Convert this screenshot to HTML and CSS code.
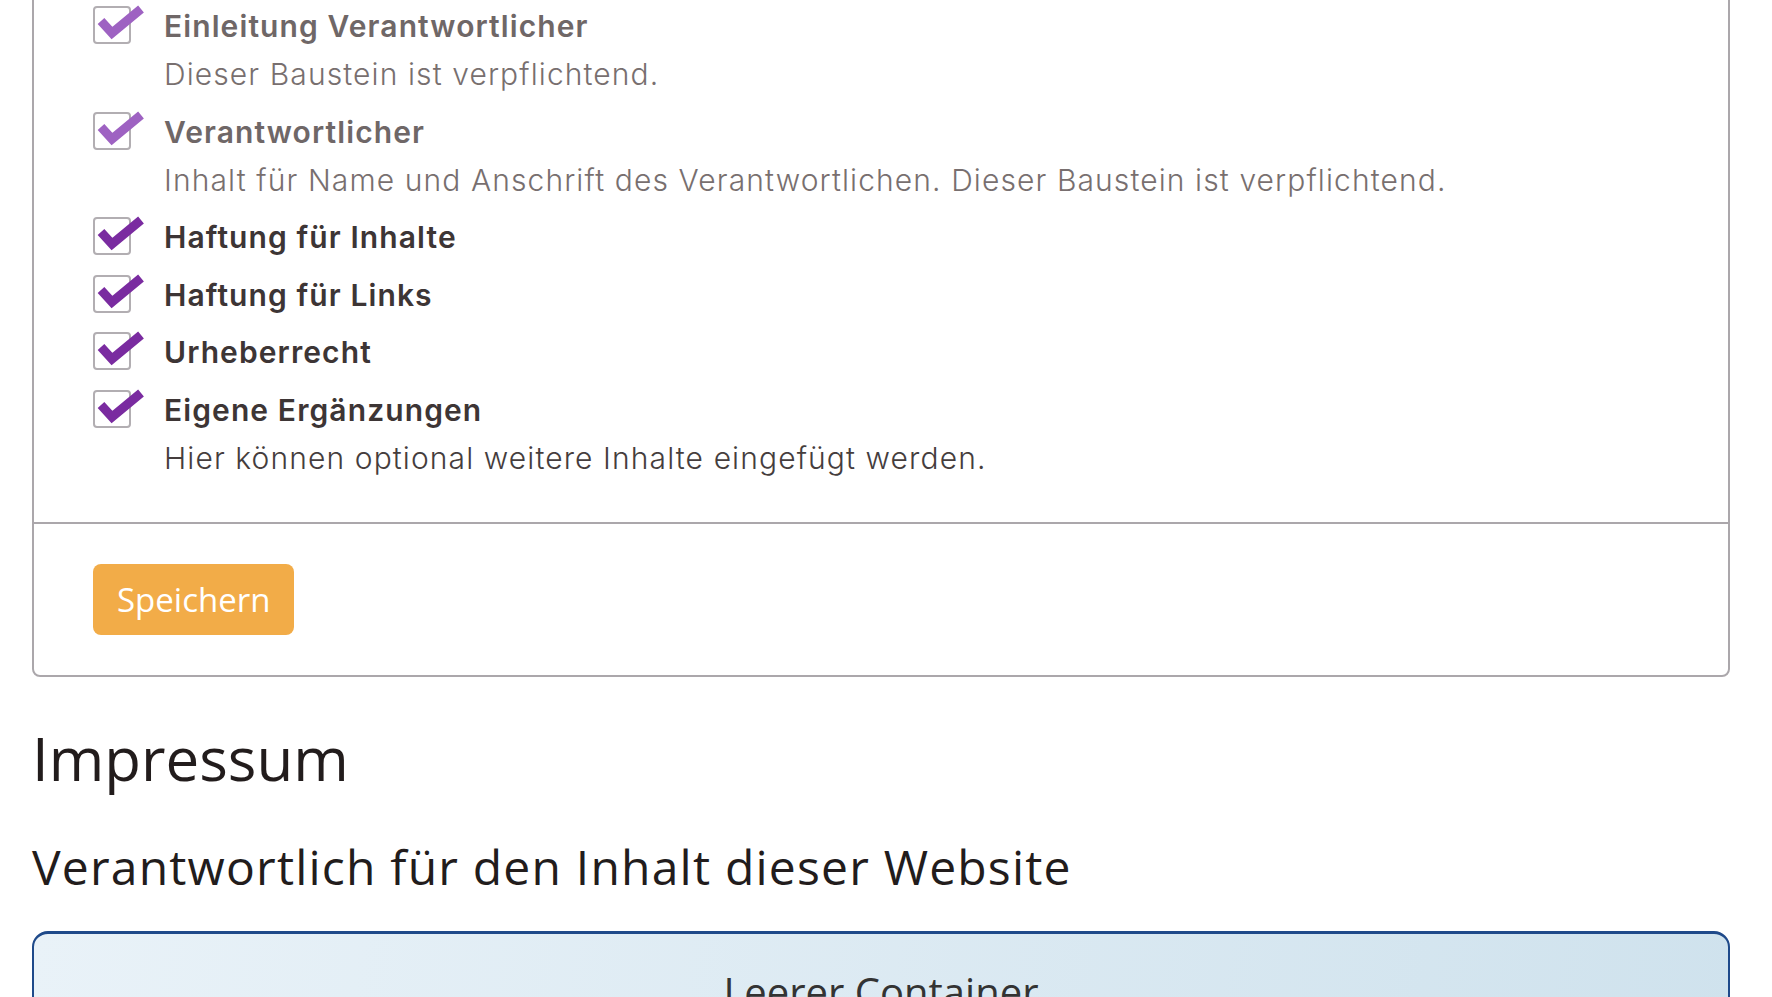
FILE: index.html
```html
<!DOCTYPE html>
<html lang="de">
<head>
<meta charset="utf-8">
<title>Impressum</title>
<link rel="stylesheet" href="styles.css">
</head>
<body>
<div class="page">
  <section class="card">
    <div class="card-body">
      <ul class="options">
        <li class="option is-locked">
          <span class="box"><svg viewBox="0 0 50 40" class="check"><path d="M8 15 L19 27 L48 3"/></svg></span>
          <div class="option-text">
            <div class="option-title">Einleitung Verantwortlicher</div>
            <div class="option-desc">Dieser Baustein ist verpflichtend.</div>
          </div>
        </li>
        <li class="option is-locked">
          <span class="box"><svg viewBox="0 0 50 40" class="check"><path d="M8 15 L19 27 L48 3"/></svg></span>
          <div class="option-text">
            <div class="option-title">Verantwortlicher</div>
            <div class="option-desc">Inhalt für Name und Anschrift des Verantwortlichen. Dieser Baustein ist verpflichtend.</div>
          </div>
        </li>
        <li class="option">
          <span class="box"><svg viewBox="0 0 50 40" class="check"><path d="M8 15 L19 27 L48 3"/></svg></span>
          <div class="option-text">
            <div class="option-title">Haftung für Inhalte</div>
          </div>
        </li>
        <li class="option">
          <span class="box"><svg viewBox="0 0 50 40" class="check"><path d="M8 15 L19 27 L48 3"/></svg></span>
          <div class="option-text">
            <div class="option-title">Haftung für Links</div>
          </div>
        </li>
        <li class="option">
          <span class="box"><svg viewBox="0 0 50 40" class="check"><path d="M8 15 L19 27 L48 3"/></svg></span>
          <div class="option-text">
            <div class="option-title">Urheberrecht</div>
          </div>
        </li>
        <li class="option">
          <span class="box"><svg viewBox="0 0 50 40" class="check"><path d="M8 15 L19 27 L48 3"/></svg></span>
          <div class="option-text">
            <div class="option-title">Eigene Ergänzungen</div>
            <div class="option-desc">Hier können optional weitere Inhalte eingefügt werden.</div>
          </div>
        </li>
      </ul>
    </div>
    <div class="card-footer">
      <button class="btn-save" type="button">Speichern</button>
    </div>
  </section>

  <h1 class="page-title">Impressum</h1>
  <h2 class="section-title">Verantwortlich für den Inhalt dieser Website</h2>
  <div class="empty-container">Leerer Container</div>
</div>
</body>
</html>
```
FILE: styles.css
```css
* { box-sizing: border-box; }
html, body { margin: 0; padding: 0; background: #fff; }
body { font-family: Inter, "Open Sans", sans-serif; overflow: hidden; }
.page { padding: 0 42px 0 32px; margin-top: -44px; }
.card { border: 2px solid #aba7ab; border-radius: 8px; }
.card-body { padding: 46px 59px 41px; }
.options { list-style: none; margin: 0; padding: 0; display: flex; flex-direction: column; gap: 12.5px; }
.option { display: flex; align-items: flex-start; gap: 33px; }
.box { flex: none; width: 38px; height: 38px; margin-top: 2px; border: 2px solid #b2aeb2; border-radius: 4px; position: relative; }
.check { position: absolute; left: -2px; top: -2px; width: 50px; height: 40px; overflow: visible; }
.check path { fill: none; stroke: #7a2ba0; stroke-width: 9; stroke-linejoin: miter; stroke-linecap: butt; }
.is-locked .check path { stroke: #9e62c2; }
.option-title { font-family: Inter, "Open Sans", sans-serif; font-weight: 600; font-size: 30px; line-height: 45px; letter-spacing: 1.1px; color: #3d3535; }
.option-desc { font-family: Inter, "Open Sans", sans-serif; font-weight: 300; font-size: 30px; line-height: 45px; letter-spacing: 1.1px; margin-top: 3px; color: #453d3d; }
.is-locked .option-title { color: #6f6767; }
.is-locked .option-desc { color: #786f6f; }
.card-footer { border-top: 2px solid #aba7ab; padding: 40px 59px; }
.btn-save { background: #f2ac48; color: #fff; border: 0; border-radius: 8px; height: 71px; padding: 0 24px; font-family: "Open Sans", sans-serif; font-size: 33px; }
.page-title { font-family: "Open Sans", sans-serif; font-weight: 400; font-size: 60px; line-height: 1.2; margin: 45.5px 0 0; color: #221c1c; }
.section-title { font-family: "Open Sans", sans-serif; font-weight: 400; font-size: 48px; line-height: 1.2; letter-spacing: 1.2px; margin: 43.5px 0 0; color: #221c1c; }
.empty-container { margin-top: 36px; height: 200px; border: 2px solid #1f4a8a; border-top-width: 3px; border-radius: 16px; background: linear-gradient(100deg, #e9f2f8, #cfe2ed); text-align: center; padding-top: 30px; font-family: "Open Sans", sans-serif; font-size: 40px; color: #333; }
```
